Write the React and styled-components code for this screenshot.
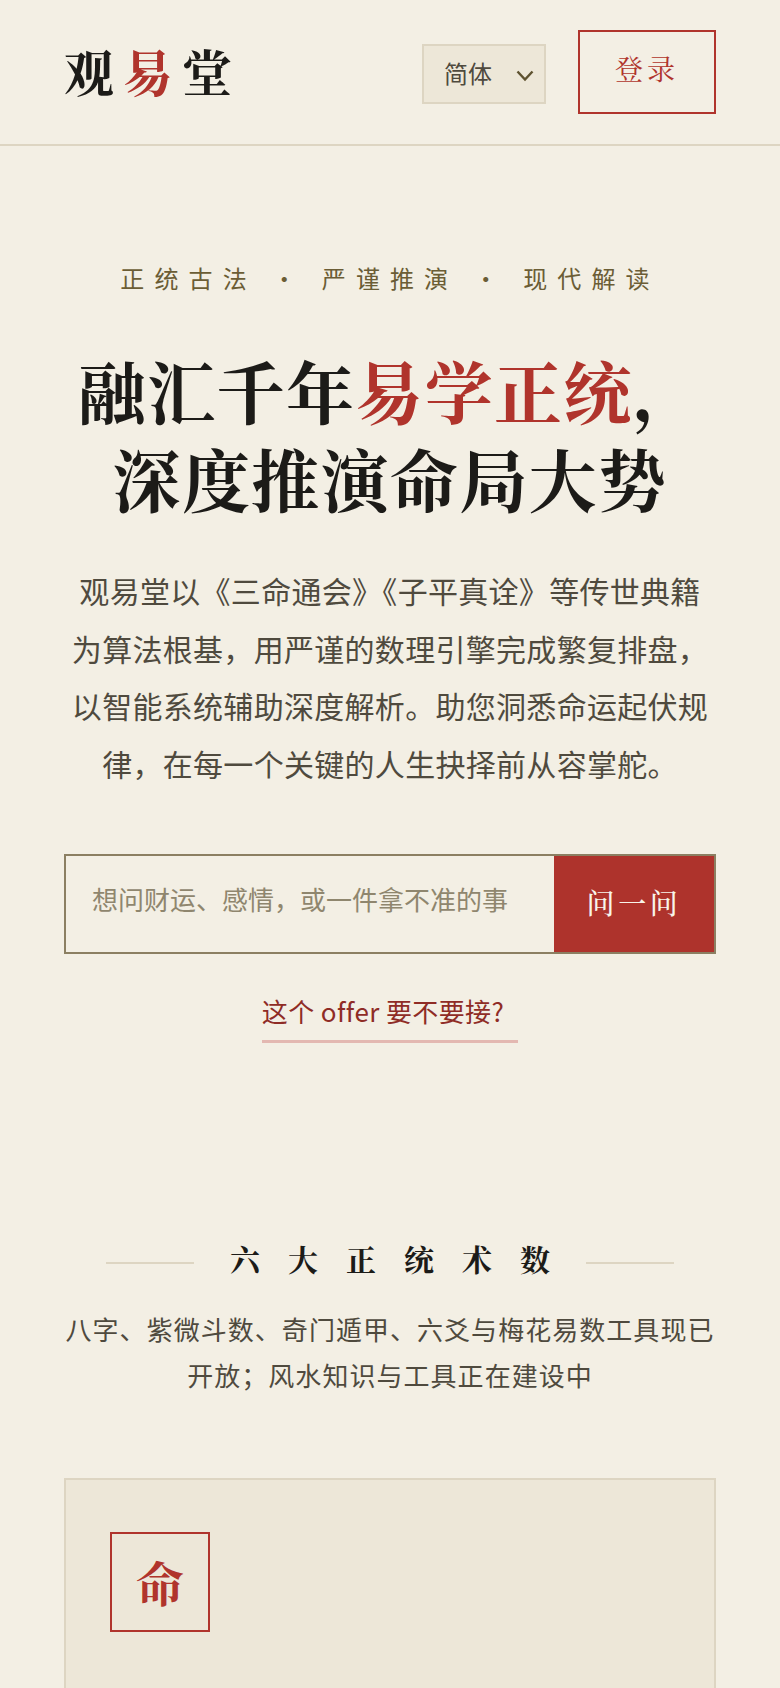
import React from 'react';
import styled, { createGlobalStyle } from 'styled-components';

const SERIF = `"Noto Serif CJK SC", "Liberation Serif", "Noto Sans CJK SC", serif`;
const SANS = `"Noto Sans CJK SC", "Noto Sans", sans-serif`;

const GlobalStyle = createGlobalStyle`
  html {
    scrollbar-width: none;
  }
  body {
    margin: 0;
    background: #f3efe4;
    font-family: ${SANS};
    color: #1c1b18;
  }
  * {
    box-sizing: border-box;
  }
`;

const Header = styled.header`
  display: flex;
  align-items: center;
  justify-content: space-between;
  height: 146px;
  padding: 2px 64px;
  border-bottom: 2px solid #ddd5c2;
`;

const Logo = styled.div`
  padding-bottom: 5px;
  font-family: ${SERIF};
  font-size: 50px;
  font-weight: 700;
  line-height: 1.2;
  letter-spacing: 9px;
`;

const Red = styled.span`
  color: #b0342c;
`;

const Actions = styled.div`
  display: flex;
  align-items: center;
  gap: 32px;
`;

const SelectWrap = styled.div`
  position: relative;
  margin-top: 4px;
`;

const LangSelect = styled.select`
  display: block;
  width: 124px;
  height: 60px;
  padding: 0 0 4px 20px;
  appearance: none;
  border: 2px solid #ddd5c2;
  border-radius: 0;
  background: #ede7d8;
  color: #4f4a3e;
  font-family: ${SANS};
  font-size: 24px;
`;

const Chevron = styled.svg`
  position: absolute;
  top: 26px;
  right: 12px;
  width: 18px;
  height: 12px;
  pointer-events: none;
`;

const LoginButton = styled.button`
  width: 138px;
  height: 84px;
  padding: 0 0 8px;
  border: 2px solid #b0342c;
  background: transparent;
  color: #b0342c;
  font-family: ${SERIF};
  font-size: 28px;
  letter-spacing: 4px;
`;

const Hero = styled.section`
  padding: 114px 64px 0;
  text-align: center;
`;

const Kicker = styled.p`
  margin: 0;
  font-size: 24px;
  line-height: 36px;
  letter-spacing: 10.1px;
  color: #6b5d35;
  white-space: nowrap;
`;

const Title = styled.h1`
  margin: 50px 0 0;
  font-family: ${SERIF};
  font-size: 68px;
  font-weight: 700;
  line-height: 88px;
  letter-spacing: 1.36px;
  color: #1c1b18;
`;

const Lead = styled.p`
  margin: 40px 0 0;
  padding: 0 6px;
  font-size: 30px;
  line-height: 57.5px;
  letter-spacing: 0.3px;
  color: #4f4a3e;
`;

const SearchBox = styled.form`
  display: flex;
  height: 100px;
  margin-top: 62px;
  border: 2px solid #8b7f62;
`;

const SearchInput = styled.input`
  flex: 1;
  min-width: 0;
  padding: 0 0 12px 26px;
  border: 0;
  outline: 0;
  background: transparent;
  font-family: ${SANS};
  font-size: 26px;
  color: #1c1b18;

  &::placeholder {
    color: #8f866e;
    opacity: 1;
  }
`;

const AskButton = styled.button`
  width: 160px;
  padding: 0 0 4px;
  border: 0;
  background: #ae332c;
  color: #f8f4ea;
  font-family: ${SERIF};
  font-size: 28px;
  font-weight: 500;
  letter-spacing: 3.6px;
`;

const SuggestLink = styled.a`
  display: inline-block;
  margin-top: 37px;
  padding-bottom: 9px;
  padding-right: 14px;
  border-bottom: 3px solid #e3b8b1;
  font-size: 26px;
  line-height: 40px;
  letter-spacing: 0.4px;
  color: #8f2c26;
  text-decoration: none;
`;

const Section = styled.section`
  padding: 193px 64px 0;
`;

const SectionHead = styled.div`
  display: flex;
  align-items: center;
  justify-content: center;
  gap: 36px;
`;

const HeadLine = styled.span`
  width: 88px;
  height: 2px;
  margin-top: 10px;
  background: #ddd5c2;
`;

const SectionTitle = styled.h2`
  margin: 0 -28px 0 0;
  font-family: ${SERIF};
  font-size: 30px;
  font-weight: 700;
  line-height: 44px;
  letter-spacing: 28px;
`;

const SectionDesc = styled.p`
  margin: 26px 0 0;
  font-size: 26px;
  line-height: 46px;
  letter-spacing: 1.04px;
  text-align: center;
  color: #4f4a3e;
`;

const Card = styled.article`
  min-height: 420px;
  margin-top: 79.6px;
  padding: 52px 44px;
  border: 2px solid #ddd5c2;
  background: #ede7d8;
`;

const Seal = styled.div`
  display: flex;
  align-items: center;
  justify-content: center;
  width: 100px;
  height: 100px;
  border: 2px solid #b0342c;
  font-family: ${SERIF};
  font-size: 48px;
  font-weight: 700;
  color: #b0342c;
`;

export default function App() {
  return (
    <>
      <GlobalStyle />
      <Header>
        <Logo>
          观<Red>易</Red>堂
        </Logo>
        <Actions>
          <SelectWrap>
            <LangSelect defaultValue="简体">
              <option>简体</option>
              <option>繁體</option>
            </LangSelect>
            <Chevron viewBox="0 0 18 12" fill="none" stroke="#5e5230" strokeWidth="2.4">
              <path d="M1.5 1.5 9 9.5l7.5-8" />
            </Chevron>
          </SelectWrap>
          <LoginButton type="button">登录</LoginButton>
        </Actions>
      </Header>
      <Hero>
        <Kicker>正统古法 · 严谨推演 · 现代解读</Kicker>
        <Title>
          融汇千年<Red>易学正统</Red>，
          <br />
          深度推演命局大势
        </Title>
        <Lead>
          观易堂以《三命通会》《子平真诠》等传世典籍为算法根基，用严谨的数理引擎完成繁复排盘，以智能系统辅助深度解析。助您洞悉命运起伏规律，在每一个关键的人生抉择前从容掌舵。
        </Lead>
        <SearchBox onSubmit={(e) => e.preventDefault()}>
          <SearchInput placeholder="想问财运、感情，或一件拿不准的事" />
          <AskButton type="submit">问一问</AskButton>
        </SearchBox>
        <SuggestLink href="#">这个 offer 要不要接?</SuggestLink>
      </Hero>
      <Section>
        <SectionHead>
          <HeadLine />
          <SectionTitle>六大正统术数</SectionTitle>
          <HeadLine />
        </SectionHead>
        <SectionDesc>八字、紫微斗数、奇门遁甲、六爻与梅花易数工具现已开放；风水知识与工具正在建设中</SectionDesc>
        <Card>
          <Seal>命</Seal>
        </Card>
      </Section>
    </>
  );
}
